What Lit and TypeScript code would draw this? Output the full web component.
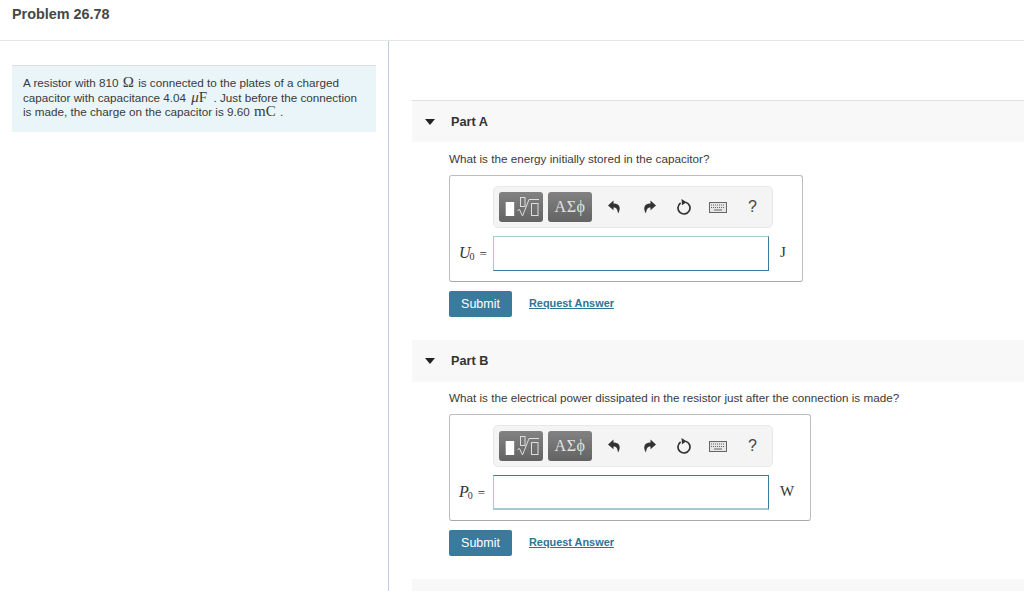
import { LitElement, html, css } from "lit";
import { customElement } from "lit/decorators.js";

const parts = [
  { name: "Part A", q: "What is the energy initially stored in the capacitor?", v: "U", unit: "J", first: true },
  { name: "Part B", q: "What is the electrical power dissipated in the resistor just after the connection is made?", v: "P", unit: "W", first: false },
];

@customElement("app-root")
export class AppRoot extends LitElement {
  static styles = css`
    :host { display: block; height: 591px; overflow: hidden; background: #fff; font-family: "Liberation Sans", Arial, sans-serif; color: #333; font-size: 11.7px; }
    .top { box-sizing: border-box; padding: 5px 12px 0; border-bottom: 1px solid #e6e6e6; height: 41px; }
    .title { font-size: 14.4px; font-weight: 700; line-height: 18px; color: #474747; }
    .main { display: flex; height: 550px; }
    .left { width: 389px; box-sizing: border-box; border-right: 1px solid #bcd0e0; padding: 24px 12px 0; flex: none; height: 100%; }
    .intro { width: 364px; height: 67px; box-sizing: border-box; background: #e9f5f8; border-top: 1px solid #dcdfe0; padding: 10px 15px 0 11px; line-height: 14.5px; font-size: 11.7px; color: #3a3a3a; }
    .m { font-family: "Liberation Serif", serif; font-size: 15px; line-height: 0; margin: 0 1px; }
    .m.wide { margin: 0 3px 0 2px; }
    .right { flex: 1; padding: 59px 0 0 23px; min-width: 0; }
    .ph { height: 42px; box-sizing: border-box; background: #f8f8f8; display: flex; align-items: center; font-weight: 700; font-size: 12.7px; color: #333; padding-left: 13px; }
    .ph.first { border-top: 1px solid #e2e2e2; }
    .tri { width: 0; height: 0; border-left: 5.5px solid transparent; border-right: 5.5px solid transparent; border-top: 6px solid #222; margin-right: 16px; }
    .body { padding: 9px 0 23px 37px; }
    .part-b { padding-top: 8px; }
    .q { line-height: 16px; margin: 0 0 8px; color: #3a3a3a; height: 16px; }
    .box { display: inline-grid; grid-template-columns: 33px 276px auto; box-sizing: border-box; border: 1px solid #bdbdbd; border-bottom-color: #a9a9a9; border-radius: 3px; padding: 10px 16px 10px 10px; height: 107px; align-items: center; vertical-align: top; }
    .tb { grid-column: 2 / 4; width: 280px; height: 42px; box-sizing: border-box; background: #f4f4f4; border: 1px solid #e8e8e8; border-radius: 5px; display: flex; align-items: center; padding-left: 5px; margin-bottom: 8px; }
    .tbtn { width: 44px; height: 30px; box-sizing: border-box; border-radius: 3px; background: linear-gradient(#828282, #636363); margin-right: 5px; display: flex; align-items: center; justify-content: center; color: #e2e2e2; font-family: "Liberation Serif", serif; font-size: 16px; letter-spacing: .5px; flex: none; }
    .tbtn svg { display: block; }
    .ic { flex: none; display: block; }
    .undo { margin-left: 11px; }
    .redo { margin-left: 22px; }
    .reset { margin-left: 20px; }
    .kbd { margin-left: 18px; }
    .help { margin-left: 21px; font-size: 16px; line-height: 16px; color: #444; margin-top: -1px; }
    .lab { font-family: "Liberation Serif", serif; font-size: 13px; white-space: nowrap; color: #333; margin: -1px 0 0 -1px; }
    .lab i { font-size: 16px; letter-spacing: -1px; }
    .lab sub { font-size: 10px; line-height: 0; vertical-align: -2px; margin-right: 5px; }
    .input { width: 276px; height: 35px; box-sizing: border-box; border: 1px solid #3a7a9c; border-top-color: #a8c8d8; border-left-color: #a8c8d8; background: #fff; }
    .part-b .input { border-top-color: #3a7a9c; border-bottom: 2px solid #a8c8d8; }
    .unit { font-family: "Liberation Serif", serif; font-size: 15px; margin-left: 11px; color: #333; margin-top: -3px; }
    .acts { display: flex; align-items: center; margin-top: 9px; }
    .sub { width: 63px; height: 26px; box-sizing: border-box; background: #3a7a9c; color: #fff; border: 0; border-radius: 2px; font: 12.5px "Liberation Sans", Arial, sans-serif; padding: 0; }
    .req { margin-left: 17px; color: #2e7496; font-weight: 700; font-size: 10.9px; text-decoration: underline; margin-top: -2px; }
    .stub { height: 12px; background: #f8f8f8; }
  `;

  private toolbar() {
    return html`<div class="tb">
      <div class="tbtn">
        <svg width="44" height="30" viewBox="0 0 44 30" fill="none">
          <rect x="6.7" y="10" width="8.5" height="14" fill="#fff"/>
          <rect x="21.5" y="5.5" width="4.5" height="9" stroke="#ddd"/>
          <path d="M18.5 18.5L20.5 17.5L23.5 24L30 7.5H40" stroke="#ddd"/>
          <rect x="32.5" y="11.5" width="6.5" height="12" stroke="#ddd"/>
        </svg>
      </div>
      <div class="tbtn">ΑΣϕ</div>
      <svg class="ic undo" width="13" height="14" viewBox="0 0 13 14"><path d="M5.5 .5L0 5.5L5.5 10.2V7.4C8.2 7.4 9.6 9 10 13.5C12.8 9 12.8 3.5 5.5 3.4Z" fill="#333"/></svg>
      <svg class="ic redo" width="13" height="14" viewBox="0 0 13 14"><path d="M7.5 .5L13 5.5L7.5 10.2V7.4C4.8 7.4 3.4 9 3 13.5C.2 9 .2 3.5 7.5 3.4Z" fill="#333"/></svg>
      <svg class="ic reset" width="15" height="16" viewBox="0 0 15 16" fill="none"><path d="M4.6 4A6 6 0 1 0 9.6 3.2" stroke="#333" stroke-width="1.7"/><path d="M5.5 0L10.5 3.2L6 6.2Z" fill="#333"/></svg>
      <svg class="ic kbd" width="18" height="11" viewBox="0 0 18 11"><rect x=".5" y=".5" width="17" height="10" fill="#e6e6e6" stroke="#666"/><path d="M2 3h14M2 5.5h14" stroke="#666" stroke-dasharray="1 1"/><path d="M5 8h8" stroke="#666"/></svg>
      <span class="ic help">?</span>
    </div>`;
  }

  render() {
    return html`
      <div class="top"><div class="title">Problem 26.78</div></div>
      <div class="main">
        <div class="left">
          <div class="intro">A resistor with 810 <span class="m">Ω</span> is connected to the plates of a charged capacitor with capacitance 4.04 <span class="m wide"><i>μ</i>F</span> . Just before the connection is made, the charge on the capacitor is 9.60 <span class="m">mC</span> .</div>
        </div>
        <div class="right">
          ${parts.map(p => html`
            <div class="ph ${p.first ? "first" : ""}"><span class="tri"></span>${p.name}</div>
            <div class="body ${p.first ? "" : "part-b"}">
              <p class="q">${p.q}</p>
              <div class="box">
                <span></span>${this.toolbar()}
                <span class="lab"><i>${p.v}</i><sub>0</sub>=</span>
                <div class="input"></div>
                <span class="unit">${p.unit}</span>
              </div>
              <div class="acts"><button class="sub">Submit</button><a class="req">Request Answer</a></div>
            </div>`)}
          <div class="stub"></div>
        </div>
      </div>`;
  }
}
